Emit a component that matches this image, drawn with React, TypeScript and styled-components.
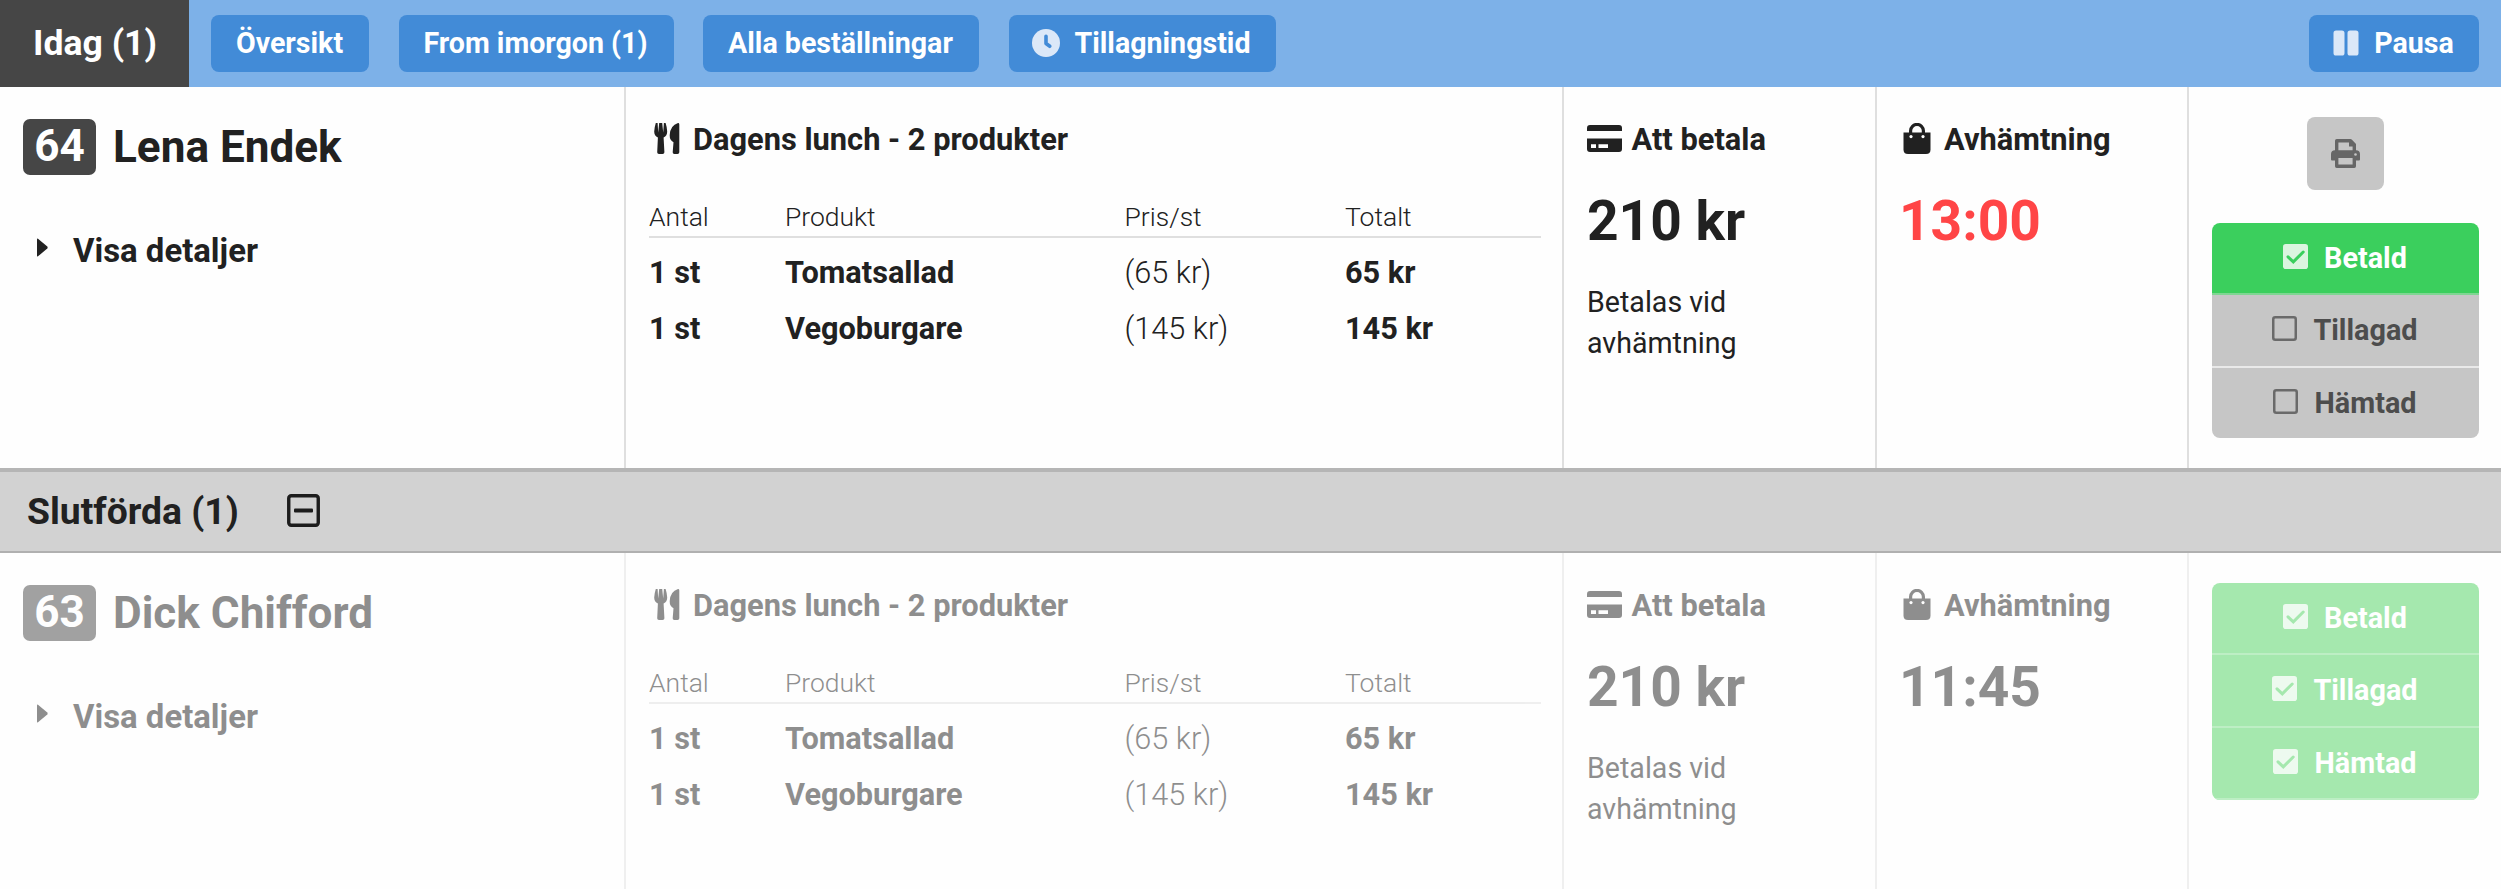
import React from "react";
import styled, { createGlobalStyle, css } from "styled-components";

const Global = createGlobalStyle`
  * { box-sizing: border-box; }
  body { margin: 0; background: #fefefe; color: #212121; font-family: Roboto, sans-serif; }
  button { font-family: inherit; border: 0; }
`;

const Page = styled.div`
  width: 100%;
  height: 889px;
  overflow: hidden;
`;

const TopBar = styled.header`
  display: flex;
  align-items: center;
  height: 87px;
  padding-right: 22px;
  background: #7db1e8;
`;

const ActiveTab = styled.div`
  display: flex;
  align-items: center;
  height: 87px;
  width: 189px;
  padding: 0 0 2px 33px;
  margin-right: 22px;
  background: #464646;
  color: #fff;
  font-size: 35.6px;
  font-weight: 700;
`;

const NavButton = styled.button<{ $width: number; $push?: boolean }>`
  display: flex;
  align-items: center;
  justify-content: center;
  width: ${(p) => p.$width}px;
  height: 57px;
  padding: 0 1px 2px 0;
  margin-right: ${(p) => (p.$push ? 0 : 29.5)}px;
  margin-left: ${(p) => (p.$push ? "auto" : 0)};
  border-radius: 8px;
  background: #428bd7;
  color: #fff;
  font-size: 28.6px;
  font-weight: 700;
  white-space: nowrap;
  svg { flex: none; margin-right: ${(p) => (p.$push ? 15 : 14)}px; }
`;

const OrderRow = styled.section<{ $done?: boolean }>`
  display: grid;
  grid-template-columns: 626px 938px 313px 312px 1fr;
  height: ${(p) => (p.$done ? 336 : 381)}px;
`;

const Column = styled.div<{ $done?: boolean }>`
  padding: 30px 22px 0 23px;
  border-right: 2px solid ${(p) => (p.$done ? "#efefef" : "#dfdfdf")};
  &:last-child { border-right: 0; }
`;

const Fade = styled.div<{ $done?: boolean }>`
  opacity: ${(p) => (p.$done ? 0.5 : 1)};
`;

const Customer = styled.div`
  display: flex;
  align-items: center;
  margin-top: 2px;
  height: 56px;
`;

const OrderNumber = styled.div`
  width: 73px;
  height: 56px;
  border-radius: 7px;
  background: #464646;
  color: #fff;
  font-size: 44.1px;
  font-weight: 700;
  line-height: 55px;
  text-align: center;
`;

const CustomerName = styled.div`
  margin-left: 17px;
  font-size: 44.1px;
  font-weight: 700;
  line-height: 55px;
  white-space: nowrap;
`;

const Details = styled.div`
  display: flex;
  align-items: center;
  margin: 56px 0 0 14px;
  height: 38px;
  font-size: 32.9px;
  font-weight: 700;
  svg { margin: -6px 25px 0 0; }
`;

const Heading = styled.h3<{ $gap: number; $indent?: number }>`
  display: flex;
  align-items: center;
  height: 44px;
  margin: 0 0 0 ${(p) => p.$indent ?? 0}px;
  font-size: 30.8px;
  font-weight: 700;
  white-space: nowrap;
  svg { flex: none; margin: -1px ${(p) => p.$gap}px 0 0; }
`;

const Table = styled.div`
  width: 892px;
  margin-top: 34px;
`;

const line = css`
  display: grid;
  grid-template-columns: 136px 339.5px 220.5px 1fr;
`;

const TableHead = styled.div`
  ${line}
  height: 43px;
  border-bottom: 2px solid #dfdfdf;
  font-size: 26.5px;
  font-weight: 300;
  line-height: 43px;
  margin-bottom: 7px;
`;

const TableLine = styled.div`
  ${line}
  height: 56px;
  font-size: 30.7px;
  font-weight: 700;
  line-height: 56px;
`;

const UnitPrice = styled.span`
  font-weight: 300;
`;

const Large = styled.div<{ $tight?: boolean; $alert?: boolean }>`
  margin: 25px 0 0 ${(p) => (p.$tight ? -1 : 0)}px;
  font-size: 55.1px;
  font-weight: 700;
  line-height: 70px;
  color: ${(p) => (p.$alert ? "#ff4546" : "inherit")};
`;

const Note = styled.div`
  width: 200px;
  margin-top: 26px;
  font-size: 28.6px;
  line-height: 40.5px;
`;

const Actions = styled.div`
  display: flex;
  flex-direction: column;
  align-items: center;
`;

const PrintButton = styled.button`
  display: flex;
  align-items: center;
  justify-content: center;
  width: 77px;
  height: 73px;
  margin-bottom: 33px;
  padding: 0;
  border-radius: 8px;
  background: #c6c6c6;
`;

const StatusGroup = styled.div`
  width: 267px;
  border-radius: 8px;
  overflow: hidden;
`;

type Tone = "on" | "off" | "done";
const tones: Record<Tone, [string, string, string]> = {
  on: ["#3bcf5d", "#fff", "#7fd692"],
  off: ["#c6c6c6", "#4d4d4d", "#e9e9e9"],
  done: ["#a5e8ae", "#fff", "#bdeec4"],
};

const StatusButton = styled.button<{ $tone: Tone }>`
  display: flex;
  align-items: center;
  justify-content: center;
  width: 100%;
  height: 72px;
  padding: 0 1px 0 0;
  border-bottom: 2px solid ${(p) => tones[p.$tone][2]};
  background: ${(p) => tones[p.$tone][0]};
  color: ${(p) => tones[p.$tone][1]};
  font-size: 28.8px;
  font-weight: 700;
  svg { margin: -3px 16px 0 0; }
  &:nth-child(2) { height: 73px; padding-bottom: 1px; }
  ${(p) => p.$tone === "off" && css`&:last-child { height: 70px; border-bottom: 0; }`}
`;

const SectionBar = styled.div`
  display: flex;
  align-items: center;
  height: 85px;
  padding: 0 0 2px 27px;
  border-top: 4px solid #b5b5b5;
  border-bottom: 2px solid #b0b0b0;
  background: #d2d2d2;
  font-size: 37.3px;
  font-weight: 700;
  svg { margin: 0 0 0 48px; }
`;

const ClockIcon = () => (
  <svg width="28" height="28" viewBox="0 0 28 28">
    <circle cx="14" cy="14" r="14" fill="#dbe8f8" />
    <path d="M14 7.2v7.3l3.8 2.8" fill="none" stroke="#428bd7" strokeWidth="3.6" strokeLinecap="round" strokeLinejoin="round" />
  </svg>
);

const PauseIcon = () => (
  <svg width="26" height="26" viewBox="0 0 26 26" fill="#dbe8f8">
    <rect x="0.5" y="0.5" width="11" height="25" rx="2.6" />
    <rect x="14.5" y="0.5" width="11" height="25" rx="2.6" />
  </svg>
);

const CaretIcon = () => (
  <svg width="11" height="19" viewBox="0 0 11 19">
    <path d="M0 1.2Q0 0 1 .7L10.3 8.6Q11 9.5 10.3 10.4L1 18.3Q0 19 0 17.8Z" fill="#212121" />
  </svg>
);

const CutleryIcon = () => (
  <svg width="26" height="31" viewBox="0 0 26 31" fill="#212121">
    <path d="M1.8 0H3.6L4.2 9.5 5.2 0H8.2L9.2 9.5 9.9 0H11.6Q12.8 3.5 13.2 8.5 13.2 12.8 9.6 14.6L10.4 29.3Q10.4 31 8.6 31H5Q3.2 31 3.2 29.3L3.9 14.6Q.2 12.8.2 8.5.6 3.5 1.8 0Z" />
    <path d="M24 .1Q25.3 0 25.3 1.5V29.2Q25.3 31 23.5 31H20.3Q18.6 31 18.7 29.2L19.5 19.3Q15.6 17.2 15.7 12.2 16.2 2.5 24 .1Z" />
  </svg>
);

const CardIcon = () => (
  <svg width="35" height="27" viewBox="0 0 35 27">
    <path d="M3 0H32Q35 0 35 3V6H0V3Q0 0 3 0ZM0 13.5H35V24Q35 27 32 27H3Q0 27 0 24Z" fill="#212121" />
    <path d="M4 19.2H9V23H4ZM11.5 19.2H21V23H11.5Z" fill="#fff" />
  </svg>
);

const BagIcon = () => (
  <svg width="28" height="31" viewBox="0 0 28 31">
    <path d="M7.6 13V7.8a6.4 6.4 0 0 1 12.8 0V13" fill="none" stroke="#212121" strokeWidth="3.2" />
    <path d="M.5 9.5H27.5V26.5Q27.5 31 23 31H5Q.5 31 .5 26.5Z" fill="#212121" />
    <circle cx="8" cy="13.6" r="1.6" fill="#fff" />
    <circle cx="20" cy="13.6" r="1.6" fill="#fff" />
  </svg>
);

const PrinterIcon = () => (
  <svg width="29" height="29" viewBox="0 0 29 29">
    <path d="M5.7 13V1.8H19.5L23.3 5.6V13" fill="none" stroke="#666" strokeWidth="3.4" strokeLinejoin="round" />
    <path d="M18 1H20.5L25 5.5V7.5H18ZM4 11.2H25Q29 11.2 29 15V20.5Q29 21.5 28 21.5H25V19H4V21.5H1Q0 21.5 0 20.5V15Q0 11.2 4 11.2Z" fill="#666" />
    <path d="M5.7 19V27.2H23.3V19" fill="none" stroke="#666" strokeWidth="3.4" strokeLinejoin="round" />
    <circle cx="24.5" cy="15.5" r="1.3" fill="#c6c6c6" />
  </svg>
);

const CheckboxIcon = ({ tone }: { tone: Tone }) =>
  tone === "off" ? (
    <svg width="25" height="25" viewBox="0 0 25 25">
      <rect x="1.25" y="1.25" width="22.5" height="22.5" rx="2" fill="none" stroke="#6a6a6a" strokeWidth="2.5" />
    </svg>
  ) : (
    <svg width="25" height="25" viewBox="0 0 25 25">
      <rect width="25" height="25" rx="2.8" fill={tone === "on" ? "#dbf5df" : "#edfaef"} />
      <path d="M5 12.8L10.3 17.8 20.2 8" fill="none" stroke={tones[tone][0]} strokeWidth="3" strokeLinecap="round" />
    </svg>
  );

const CollapseIcon = () => (
  <svg width="33" height="33" viewBox="0 0 33 33">
    <rect x="1.75" y="1.75" width="29.5" height="29.5" rx="2.5" fill="none" stroke="#1c1c1c" strokeWidth="3.4" />
    <rect x="7" y="14.6" width="19" height="4" rx="1" fill="#1c1c1c" />
  </svg>
);

const products = [
  { name: "Tomatsallad", price: "65 kr" },
  { name: "Vegoburgare", price: "145 kr" },
];

interface OrderProps {
  number: number;
  customer: string;
  time: string;
  late?: boolean;
  done?: boolean;
  statuses: Tone[];
}

const Order = ({ number, customer, time, late, done, statuses }: OrderProps) => (
  <OrderRow $done={done}>
    <Column $done={done}>
      <Fade $done={done}>
        <Customer>
          <OrderNumber>{number}</OrderNumber>
          <CustomerName>{customer}</CustomerName>
        </Customer>
        <Details><CaretIcon />Visa detaljer</Details>
      </Fade>
    </Column>
    <Column $done={done}>
      <Fade $done={done}>
        <Heading $gap={13} $indent={5}><CutleryIcon />Dagens lunch - 2 produkter</Heading>
        <Table>
          <TableHead>
            <span>Antal</span><span>Produkt</span><span>Pris/st</span><span>Totalt</span>
          </TableHead>
          {products.map((p) => (
            <TableLine key={p.name}>
              <span>1 st</span>
              <span>{p.name}</span>
              <UnitPrice>({p.price})</UnitPrice>
              <span>{p.price}</span>
            </TableLine>
          ))}
        </Table>
      </Fade>
    </Column>
    <Column $done={done}>
      <Fade $done={done}>
        <Heading $gap={9.5}><CardIcon />Att betala</Heading>
        <Large>210 kr</Large>
        <Note>Betalas vid avhämtning</Note>
      </Fade>
    </Column>
    <Column $done={done}>
      <Fade $done={done}>
        <Heading $gap={13} $indent={3}><BagIcon />Avhämtning</Heading>
        <Large $tight $alert={late}>{time}</Large>
      </Fade>
    </Column>
    <Column>
      <Actions>
        {!done && <PrintButton aria-label="Skriv ut"><PrinterIcon /></PrintButton>}
        <StatusGroup>
          {["Betald", "Tillagad", "Hämtad"].map((label, i) => (
            <StatusButton key={label} $tone={statuses[i]}>
              <CheckboxIcon tone={statuses[i]} />
              {label}
            </StatusButton>
          ))}
        </StatusGroup>
      </Actions>
    </Column>
  </OrderRow>
);

export default function App() {
  return (
    <Page>
      <Global />
      <TopBar>
        <ActiveTab>Idag (1)</ActiveTab>
        <NavButton $width={158}>Översikt</NavButton>
        <NavButton $width={275}>From imorgon (1)</NavButton>
        <NavButton $width={276}>Alla beställningar</NavButton>
        <NavButton $width={267}><ClockIcon />Tillagningstid</NavButton>
        <NavButton $width={170} $push><PauseIcon />Pausa</NavButton>
      </TopBar>
      <Order number={64} customer="Lena Endek" time="13:00" late statuses={["on", "off", "off"]} />
      <SectionBar>Slutförda (1)<CollapseIcon /></SectionBar>
      <Order number={63} customer="Dick Chifford" time="11:45" done statuses={["done", "done", "done"]} />
    </Page>
  );
}
